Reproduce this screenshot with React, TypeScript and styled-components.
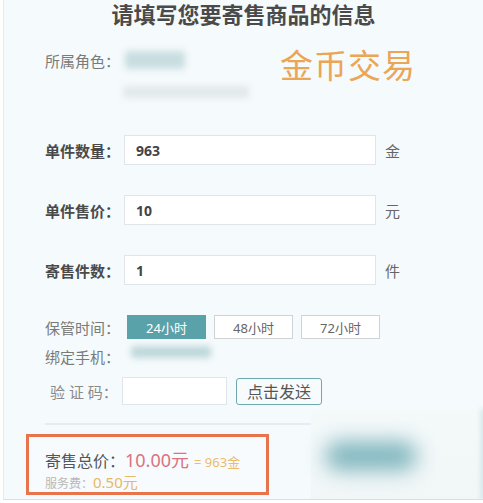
import React, { useState } from 'react';
import styled, { createGlobalStyle } from 'styled-components';

const GlobalStyle = createGlobalStyle`
  html, body {
    margin: 0;
    padding: 0;
    background: #ffffff;
  }
  body {
    font-family: "Noto Sans", "Noto Sans CJK SC", sans-serif;
  }
`;

const times = ['24小时', '48小时', '72小时'];

export default function App() {
  const [time, setTime] = useState(0);

  return (
    <>
      <GlobalStyle />
      <Page>
        <Title>请填写您要寄售商品的信息</Title>
        <Body>
          <RoleSection>
            <RoleInfo>
              <RoleLine>
                <PlainLabel>所属角色：</PlainLabel>
                <Blur $w={60} $h={18} $color="#c9dee1" />
              </RoleLine>
              <RoleExtra>
                <Blur $w={126} $h={12} $color="#e2e9eb" />
              </RoleExtra>
            </RoleInfo>
            <Tag>金币交易</Tag>
          </RoleSection>

          <FormRow $top={10}>
            <BoldLabel>单件数量：</BoldLabel>
            <TextInput defaultValue="963" />
            <Unit>金</Unit>
          </FormRow>
          <FormRow $top={30}>
            <BoldLabel>单件售价：</BoldLabel>
            <TextInput defaultValue="10" />
            <Unit>元</Unit>
          </FormRow>
          <FormRow $top={30}>
            <BoldLabel>寄售件数：</BoldLabel>
            <TextInput defaultValue="1" />
            <Unit>件</Unit>
          </FormRow>

          <SmallRow $top={30} $h={24}>
            <PlainLabel>保管时间：</PlainLabel>
            <TimeGroup>
              {times.map((t, i) => (
                <TimeButton key={t} $active={time === i} onClick={() => setTime(i)}>
                  {t}
                </TimeButton>
              ))}
            </TimeGroup>
          </SmallRow>
          <SmallRow $top={5} $h={24}>
            <PlainLabel>绑定手机：</PlainLabel>
            <PhoneBlur>
              <Blur $w={80} $h={12} $color="#bfd8db" />
            </PhoneBlur>
          </SmallRow>
          <SmallRow $top={9} $h={28}>
            <CodeLabel>验 证 码：</CodeLabel>
            <CodeInput />
            <SendButton>点击发送</SendButton>
          </SmallRow>

          <Divider />

          <TotalBox>
            <TotalLine>
              <TotalLabel>寄售总价：</TotalLabel>
              <Price>10.00元</Price>
              <Gold>= 963金</Gold>
            </TotalLine>
            <FeeLine>
              <FeeLabel>服务费：</FeeLabel>
              <Fee>0.50元</Fee>
            </FeeLine>
          </TotalBox>
        </Body>

        <Mask>
          <MaskBlob />
          <MaskEdge />
        </Mask>
      </Page>
    </>
  );
}

const Page = styled.div`
  position: relative;
  width: 483px;
  height: 500px;
  box-sizing: border-box;
  background: #f5fafc;
  border-left: 1px solid #e4eef2;
  border-bottom: 1px solid #dcdce6;
  margin-left: 3px;
  overflow: hidden;
`;

const Title = styled.h1`
  margin: 0 0 0 -3px;
  padding-top: 0;
  font-size: 22px;
  line-height: 28px;
  font-weight: 700;
  color: #4a4a4a;
  text-align: center;
`;

const Body = styled.div`
  padding-left: 41px;
`;

const RoleSection = styled.div`
  display: flex;
  align-items: flex-start;
  margin-top: 20px;
  height: 77px;
`;

const RoleInfo = styled.div`
  display: flex;
  flex-direction: column;
`;

const RoleLine = styled.div`
  display: flex;
  align-items: center;
  height: 24px;
`;

const RoleExtra = styled.div`
  margin: 14px 0 0 78px;
`;

const Blur = styled.div<{ $w: number; $h: number; $color: string }>`
  width: ${(p) => p.$w}px;
  height: ${(p) => p.$h}px;
  background: ${(p) => p.$color};
  filter: blur(3px);
  border-radius: 3px;
`;

const Tag = styled.div`
  margin: -3px 0 0 31px;
  font-size: 33px;
  line-height: 38px;
  color: #eba556;
  font-family: "Noto Sans CJK SC", sans-serif;
  letter-spacing: 1px;
`;

const PlainLabel = styled.span`
  font-size: 15px;
  color: #7a7a7a;
  white-space: nowrap;
  width: 80px;
  flex-shrink: 0;
`;

const FormRow = styled.div<{ $top: number }>`
  display: flex;
  align-items: center;
  height: 30px;
  margin-top: ${(p) => p.$top}px;
`;

const BoldLabel = styled.span`
  width: 79px;
  font-size: 15px;
  font-weight: 700;
  color: #4a4a4a;
  white-space: nowrap;
`;

const TextInput = styled.input`
  width: 252px;
  height: 30px;
  box-sizing: border-box;
  border: 1px solid #dfe5e8;
  background: #fff;
  padding: 0 11px;
  font-family: "Noto Sans", sans-serif;
  font-size: 14px;
  font-weight: 700;
  color: #444;
  outline: none;
`;

const Unit = styled.span`
  margin-left: 9px;
  font-size: 15px;
  color: #666;
`;

const SmallRow = styled.div<{ $top: number; $h: number }>`
  display: flex;
  align-items: center;
  height: ${(p) => p.$h}px;
  margin-top: ${(p) => p.$top}px;
`;

const TimeGroup = styled.div`
  display: flex;
  gap: 8px;
  margin-left: 2px;
`;

const TimeButton = styled.button<{ $active: boolean }>`
  width: 79px;
  height: 24px;
  box-sizing: border-box;
  padding: 0;
  border: 1px solid ${(p) => (p.$active ? '#5aa2aa' : '#cfd3d5')};
  background: ${(p) => (p.$active ? '#5aa2aa' : '#ffffff')};
  color: ${(p) => (p.$active ? '#ffffff' : '#666')};
  font-family: "Noto Sans", "Noto Sans CJK SC", sans-serif;
  font-size: 13px;
  cursor: pointer;
`;

const PhoneBlur = styled.div`
  margin: -8px 0 0 6px;
`;

const CodeLabel = styled.span`
  width: 72px;
  padding-left: 5px;
  font-size: 15px;
  color: #8a8a8a;
  white-space: nowrap;
`;

const CodeInput = styled.input`
  width: 105px;
  height: 28px;
  box-sizing: border-box;
  border: 1px solid #dfe5e8;
  background: #fff;
  outline: none;
`;

const SendButton = styled.button`
  margin-left: 9px;
  width: 86px;
  height: 27px;
  box-sizing: border-box;
  border: 1px solid #6ea9b1;
  border-radius: 3px;
  background: #f8fbfc;
  color: #555;
  font-family: "Noto Sans CJK SC", sans-serif;
  font-size: 16px;
  padding: 0;
  cursor: pointer;
`;

const Divider = styled.div`
  margin-top: 18px;
  width: 300px;
  height: 2px;
  background: #e6edf0;
`;

const TotalBox = styled.div`
  margin: 9px 0 0 -19px;
  width: 243px;
  height: 61px;
  box-sizing: border-box;
  border: 3px solid #e9744b;
  padding: 9px 0 0 16px;
  background: #f7fbfd;
`;

const TotalLine = styled.div`
  display: flex;
  align-items: baseline;
  height: 24px;
`;

const TotalLabel = styled.span`
  font-size: 16px;
  color: #555;
`;

const Price = styled.span`
  font-size: 18px;
  color: #d9747e;
`;

const Gold = styled.span`
  margin-left: 5px;
  font-size: 13px;
  color: #ecbc6a;
`;

const FeeLine = styled.div`
  display: flex;
  align-items: baseline;
  margin-top: 1px;
`;

const FeeLabel = styled.span`
  font-size: 12px;
  color: #b8b8b8;
`;

const Fee = styled.span`
  font-size: 15px;
  color: #e9b862;
`;

const Mask = styled.div`
  position: absolute;
  left: 307px;
  top: 409px;
  width: 180px;
  height: 91px;
  background: linear-gradient(180deg, #f4f9fa 0%, #f1f6f7 100%);
`;

const MaskBlob = styled.div`
  position: absolute;
  left: 14px;
  top: 32px;
  width: 92px;
  height: 30px;
  border-radius: 15px;
  background: #84b8c0;
  filter: blur(10px);
`;

const MaskEdge = styled.div`
  position: absolute;
  right: 6px;
  top: 0;
  width: 4px;
  height: 91px;
  background: #cfe3e6;
  filter: blur(2px);
`;
